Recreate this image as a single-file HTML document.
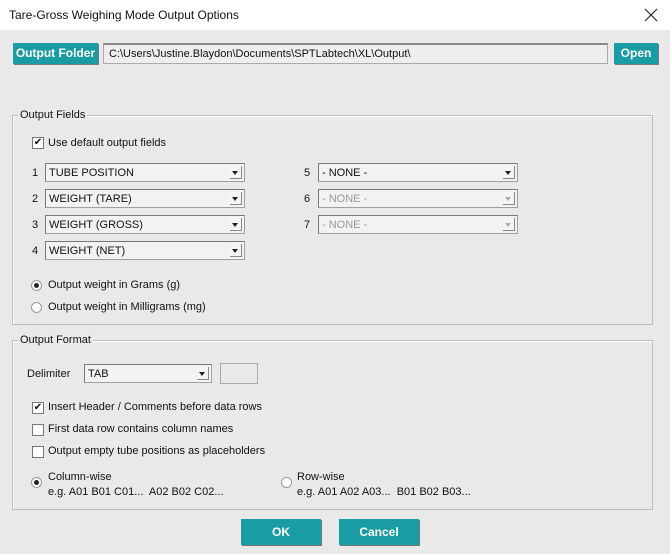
<!DOCTYPE html><html><head><style>
body{margin:0;width:670px;height:554px;background:#e9e9e9;font-family:"Liberation Sans",sans-serif;font-size:11px;color:#111;position:relative;overflow:hidden}
.a{position:absolute}
.title{left:0;top:0;width:670px;height:30px;background:#fff}
.btn{background:#1a9ca4;color:#fff;font-weight:bold;font-size:12px;text-align:center;box-shadow:1px 1px 0 #777}
.grp{border:1px solid #bdbdbd;box-shadow:inset 1px 1px 0 #fff}
.lg{background:#e9e9e9;padding:0 2px}
.sel{background:#f2f2f2;border:1px solid #a0a0a0;border-top-color:#777;border-left-color:#777;height:19px;line-height:18px;padding-left:3px;box-sizing:border-box}
.sel .ar{position:absolute;right:2px;top:2px;width:12px;height:13px;background:#f4f4f4;border-right:1px solid #888;border-bottom:1px solid #888;box-sizing:border-box}
.sel .ar:after{content:"";position:absolute;left:2px;top:5px;border-left:3px solid transparent;border-right:3px solid transparent;border-top:4px solid #222}
.dis{color:#999}.dis .ar:after{border-top-color:#aaa}
.cb{width:10px;height:10px;border:1px solid #777;background:#fff;font-size:10px;line-height:10px;text-align:center}
.rd{width:9px;height:9px;border-radius:50%;border:1px solid #999;background:#fff}
.rd.on:after{content:"";position:absolute;left:2px;top:2px;width:5px;height:5px;border-radius:50%;background:#222}
</style></head><body>
<div class="a title"></div>
<div class="a" style="left:9px;top:8px;font-size:12px">Tare-Gross Weighing Mode Output Options</div>
<svg class="a" style="left:644px;top:8px" width="14" height="14"><path d="M1 1L13 13M13 1L1 13" stroke="#222" stroke-width="1.1"/></svg>
<div class="a btn" style="left:13px;top:43px;width:85px;height:21px;line-height:21px">Output Folder</div>
<div class="a" style="left:103px;top:43px;width:505px;height:21px;line-height:19px;background:#eee;border:1px solid #aaa;border-top:2px solid #888;box-sizing:border-box;padding-left:5px">C:\Users\Justine.Blaydon\Documents\SPTLabtech\XL\Output\</div>
<div class="a btn" style="left:614px;top:43px;width:44px;height:21px;line-height:21px">Open</div>

<div class="a grp" style="left:12px;top:115px;width:639px;height:208px"></div>
<div class="a lg" style="left:18px;top:109px">Output Fields</div>
<div class="a cb" style="left:32px;top:137px">✔</div>
<div class="a" style="left:48px;top:137px">Use default output fields</div>
<div class="a" style="left:32px;top:167px">1</div><div class="a sel" style="left:45px;top:163px;width:200px">TUBE POSITION<span class="ar"></span></div>
<div class="a" style="left:32px;top:193px">2</div><div class="a sel" style="left:45px;top:189px;width:200px">WEIGHT (TARE)<span class="ar"></span></div>
<div class="a" style="left:32px;top:219px">3</div><div class="a sel" style="left:45px;top:215px;width:200px">WEIGHT (GROSS)<span class="ar"></span></div>
<div class="a" style="left:32px;top:245px">4</div><div class="a sel" style="left:45px;top:241px;width:200px">WEIGHT (NET)<span class="ar"></span></div>
<div class="a" style="left:304px;top:167px">5</div><div class="a sel" style="left:318px;top:163px;width:200px">- NONE -<span class="ar"></span></div>
<div class="a" style="left:304px;top:193px">6</div><div class="a sel dis" style="left:318px;top:189px;width:200px">- NONE -<span class="ar"></span></div>
<div class="a" style="left:304px;top:219px">7</div><div class="a sel dis" style="left:318px;top:215px;width:200px">- NONE -<span class="ar"></span></div>
<div class="a rd on" style="left:31px;top:280px"></div><div class="a" style="left:48px;top:279px">Output weight in Grams (g)</div>
<div class="a rd" style="left:31px;top:302px"></div><div class="a" style="left:48px;top:301px">Output weight in Milligrams (mg)</div>

<div class="a grp" style="left:12px;top:340px;width:639px;height:168px"></div>
<div class="a lg" style="left:18px;top:334px">Output Format</div>
<div class="a" style="left:27px;top:368px">Delimiter</div>
<div class="a sel" style="left:84px;top:364px;width:128px">TAB<span class="ar"></span></div>
<div class="a" style="left:220px;top:363px;width:38px;height:21px;border:1px solid #aaa;box-sizing:border-box"></div>
<div class="a cb" style="left:32px;top:402px">✔</div><div class="a" style="left:48px;top:401px">Insert Header / Comments before data rows</div>
<div class="a cb" style="left:32px;top:424px"></div><div class="a" style="left:48px;top:423px">First data row contains column names</div>
<div class="a cb" style="left:32px;top:446px"></div><div class="a" style="left:48px;top:445px">Output empty tube positions as placeholders</div>
<div class="a rd on" style="left:31px;top:477px"></div>
<div class="a" style="left:48px;top:471px">Column-wise</div><div class="a" style="left:48px;top:486px">e.g. A01 B01 C01...&nbsp; A02 B02 C02...</div>
<div class="a rd" style="left:281px;top:477px"></div>
<div class="a" style="left:297px;top:471px">Row-wise</div><div class="a" style="left:297px;top:486px">e.g. A01 A02 A03...&nbsp; B01 B02 B03...</div>
<div class="a btn" style="left:241px;top:519px;width:80px;height:26px;line-height:26px">OK</div>
<div class="a btn" style="left:339px;top:519px;width:80px;height:26px;line-height:26px">Cancel</div>
</body></html>
